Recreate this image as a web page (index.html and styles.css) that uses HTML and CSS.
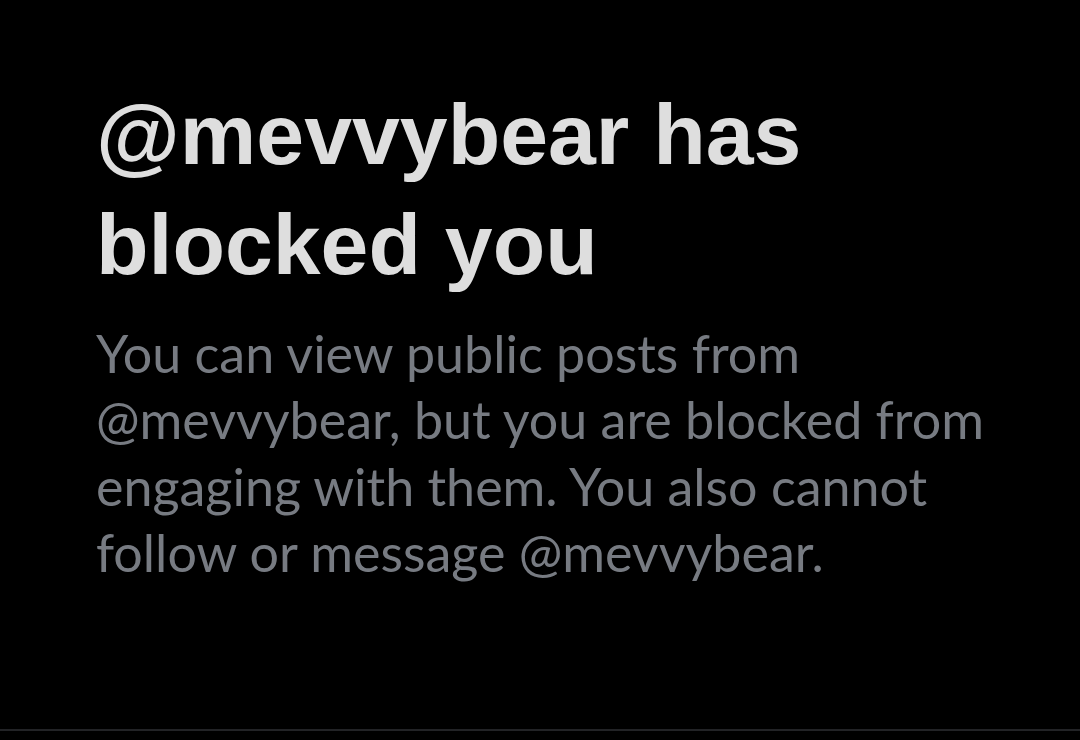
FILE: index.html
```html
<!DOCTYPE html>
<html lang="en">
<head>
<meta charset="utf-8">
<title>Blocked</title>
<link rel="stylesheet" href="styles.css">
</head>
<body>
<main class="screen">
  <section class="notice">
    <h1 class="notice-title">@mevvybear has blocked you</h1>
    <p class="notice-text">You can view public posts from @mevvybear, but you are blocked from engaging with them. You also cannot follow or message @mevvybear.</p>
  </section>
</main>
</body>
</html>
```
FILE: styles.css
```css
html, body {
  margin: 0;
  padding: 0;
  background: #000;
}
.screen {
  height: 729px;
  border-bottom: 2px solid #222326;
  box-sizing: content-box;
}
.notice {
  padding: 79px 40px 0 96px;
  width: 920px;
}
.notice-title {
  margin: 0;
  width: 760px;
  font-family: "Liberation Sans", Arial, sans-serif;
  font-weight: 700;
  font-size: 86px;
  line-height: 110px;
  color: #dedede;
}
.notice-text {
  margin: 21px 0 0;
  font-family: Lato, "Noto Sans", sans-serif;
  font-size: 52px;
  line-height: 66.3px;
  color: #777b82;
}
```
